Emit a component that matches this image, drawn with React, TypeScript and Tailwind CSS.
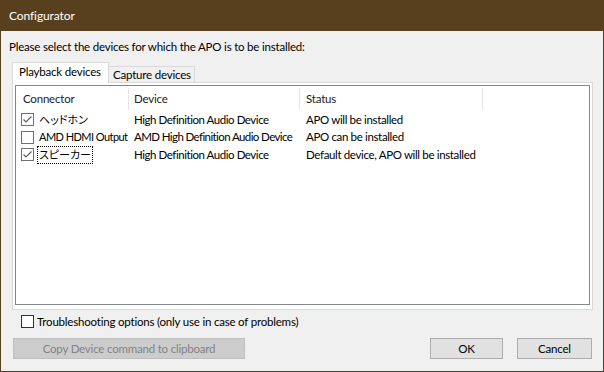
import React from "react";

function Check({ dark, checked }: { dark?: boolean; checked?: boolean }) {
  return (
    <div
      className={`w-[13px] h-[13px] shrink-0 border bg-white flex items-center justify-center ${
        dark ? "border-[#333333]" : "border-[#707070]"
      }`}
    >
      {checked && (
        <svg width="11" height="11" viewBox="0 0 11 11">
          <polyline points="1.5,5.5 4,8 9.5,2.5" fill="none" stroke="#5f5f5f" strokeWidth="1.2" />
        </svg>
      )}
    </div>
  );
}

const rows = [
  { name: "ヘッドホン", device: "High Definition Audio Device", status: "APO will be installed", checked: true, focus: false, narrow: false },
  { name: "AMD HDMI Output", device: "AMD High Definition Audio Device", status: "APO can be installed", checked: false, focus: false, narrow: true },
  { name: "スピーカー", device: "High Definition Audio Device", status: "Default device, APO will be installed", checked: true, focus: true, narrow: false },
];

export default function App() {
  return (
    <div className="w-[604px] h-[372px] bg-[#58401f] px-px pb-px flex flex-col font-[Lato,'Noto_Sans_CJK_JP',sans-serif] text-[11.5px] tracking-[-0.2px] leading-[16px] whitespace-nowrap">
      <div className="h-[31px] shrink-0 pl-[8px] flex items-center text-white text-[12px] tracking-[-0.1px]">Configurator</div>
      <div className="flex-1 bg-[#f0f0f0] px-[8px] pt-[8px] text-black flex flex-col">
        <div className="h-[16px]">Please select the devices for which the APO is to be installed:</div>
        <div className="flex items-end mt-[7px] ml-[3px] h-[21px] relative z-10 -mb-px">
          <div className="h-[21px] w-[97px] bg-white border border-[#d9d9d9] border-b-0 pl-[6px] pt-[1px]">
            Playback devices
          </div>
          <div className="h-[17px] w-[86px] border border-[#d9d9d9] border-l-0 border-b-[#d9d9d9] pl-[4px]">
            Capture devices
          </div>
        </div>
        <div className="ml-[3px] w-[581px] h-[228px] bg-white border border-[#d9d9d9] pt-[2px] px-[2px] pb-[4px] flex flex-col">
          <div className="flex-1 border border-[#828790] bg-white flex flex-col">
            <div className="h-[25px] flex items-center text-[#222222]">
              <div className="w-[112px] pl-[7px]">Connector</div>
              <div className="w-px h-[22px] bg-[#e5e5e5]" />
              <div className="w-[170px] pl-[5px]">Device</div>
              <div className="w-px h-[22px] bg-[#e5e5e5]" />
              <div className="w-[182px] pl-[6px]">Status</div>
              <div className="w-px h-[22px] bg-[#e5e5e5]" />
            </div>
            {rows.map((r) => (
              <div key={r.name} className="h-[17.5px] flex items-center tracking-[-0.45px]">
                <div className="w-[112px] shrink-0 pl-[5px] flex items-center h-full">
                  <Check checked={r.checked} />
                  <span
                    className={`ml-[3px] px-[1px] h-full flex items-center border ${
                      r.focus ? "border-dotted border-black" : "border-transparent"
                    } ${r.narrow ? "text-[11px] tracking-[-0.55px]" : "[font-feature-settings:'palt'] text-[11px] tracking-[0px]"}`}
                  >
                    {r.name}
                  </span>
                </div>
                <div className={`w-[172px] shrink-0 pl-[6px] ${r.narrow ? "tracking-[-0.6px]" : ""}`}>{r.device}</div>
                <div className="w-[183px] shrink-0 pl-[6px] tracking-[-0.35px]">{r.status}</div>
              </div>
            ))}
          </div>
        </div>
        <div className="mt-[5px] ml-[12px] flex items-center h-[13px]">
          <Check dark />
          <span className="ml-[3px]">Troubleshooting options (only use in case of problems)</span>
        </div>
        <div className="mt-[10px] flex items-center h-[21px]">
          <div className="ml-[4px] w-[232px] h-[21px] bg-[#cccccc] border border-[#bfbfbf] text-[#838383] flex items-center justify-center">
            Copy Device command to clipboard
          </div>
          <div className="ml-auto w-[73px] h-[21px] bg-[#e1e1e1] border border-[#adadad] flex items-center justify-center">
            OK
          </div>
          <div className="ml-[14px] mr-[3px] w-[75px] h-[21px] bg-[#e1e1e1] border border-[#adadad] flex items-center justify-center">
            Cancel
          </div>
        </div>
      </div>
    </div>
  );
}
